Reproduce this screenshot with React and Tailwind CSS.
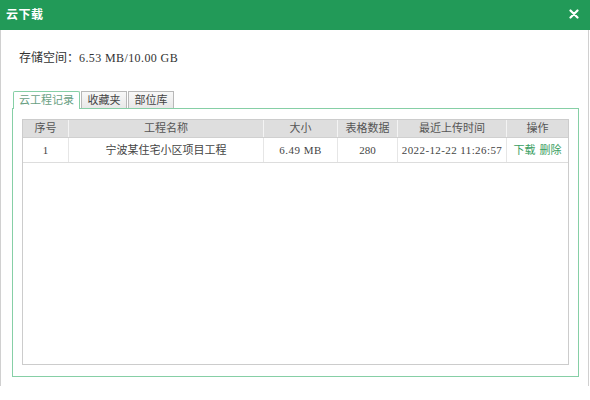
export default function App() {
  const font = "font-['Liberation_Serif','Noto_Sans_CJK_SC',serif]";
  const cols = "grid grid-cols-[46px_195px_74px_60px_109px_1fr]";
  const headers = ["序号", "工程名称", "大小", "表格数据", "最近上传时间", "操作"];
  return (
    <div className={`w-[590px] h-[400px] bg-white ${font} text-[#333]`}>
      <div className="h-[30px] bg-[#229a58] flex items-center justify-between pl-[6px] pr-[11px]">
        <span className="text-white text-[12px] font-bold tracking-[0.5px]">云下载</span>
        <svg width="10" height="10" viewBox="0 0 10 10" className="mt-[-2px]">
          <path d="M1.5 1.5 L8.5 8.5 M8.5 1.5 L1.5 8.5" stroke="white" strokeWidth="2.2" strokeLinecap="round" />
        </svg>
      </div>
      <div className="w-[589px] h-[356px] border-l border-r border-[#d0d0d0] pl-[11px]">
        <div className="pt-[19px] pl-[7px] h-[36px] text-[12px] leading-[18px]">
          存储空间：<span className="tracking-[0.4px]">6.53 MB/10.00 GB</span>
        </div>
        <div className="mt-[25px] flex gap-[1px] pl-[1px] h-[17px] relative z-10">
          <div className="w-[67px] h-[18px] bg-white border border-b-0 border-[#86cfa6] rounded-t-[2px] flex items-center justify-center text-[11px] text-[#6a9f84]">
            云工程记录
          </div>
          <div className="w-[46px] h-[17px] bg-gradient-to-b from-[#f8f8f8] to-[#e8e8e8] border border-[#b8b8b8] border-b-0 flex items-center justify-center text-[11px] text-[#444]">
            收藏夹
          </div>
          <div className="w-[46px] h-[17px] bg-gradient-to-b from-[#f8f8f8] to-[#e8e8e8] border border-[#b8b8b8] border-b-0 flex items-center justify-center text-[11px] text-[#444]">
            部位库
          </div>
        </div>
        <div className="w-[567px] h-[269px] border border-[#86cfa6] pt-[10px] pl-[9px] pr-[9px] pb-[11px]">
          <div className="h-full border border-[#cccccc] text-[11px]">
            <div className={`${cols} h-[18px] bg-[#dedede] border-b border-[#d0d0d0]`}>
              {headers.map((h, i) => (
                <div
                  key={h}
                  className={`flex items-center justify-center text-[#555] ${i < 5 ? "border-r border-[#f4f4f4]" : ""}`}
                >
                  {h}
                </div>
              ))}
            </div>
            <div className={`${cols} h-[25px] border-b border-[#dddddd] text-[#444]`}>
              <div className="flex items-center justify-center border-r border-[#e6e6e6]">1</div>
              <div className="flex items-center justify-center border-r border-[#e6e6e6]">宁波某住宅小区项目工程</div>
              <div className="flex items-center justify-center border-r border-[#e6e6e6] tracking-[0.5px]">6.49 MB</div>
              <div className="flex items-center justify-center border-r border-[#e6e6e6]">280</div>
              <div className="flex items-center justify-center border-r border-[#e6e6e6] tracking-[0.4px]">2022-12-22 11:26:57</div>
              <div className="flex items-center justify-center gap-[4px] text-[#3a9e62]">
                <span>下载</span>
                <span>删除</span>
              </div>
            </div>
          </div>
        </div>
      </div>
    </div>
  );
}
